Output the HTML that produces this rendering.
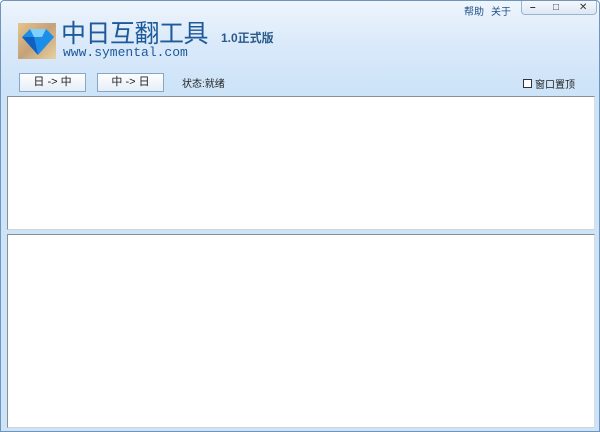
<!DOCTYPE html>
<html><head><meta charset="utf-8"><style>
*{margin:0;padding:0;box-sizing:border-box}
body{width:600px;height:432px;overflow:hidden;font-family:"Liberation Sans","Noto Sans CJK SC",sans-serif;font-size:12px}
.win{position:absolute;left:0;top:0;width:600px;height:432px;border:1px solid #6f95bd;border-radius:4px 4px 0 0;background:linear-gradient(#eef5fc 0px,#dbeafa 40px,#cde3f8 90px,#cde3f8 100%)}
.logo{position:absolute;left:17px;top:22px;width:38px;height:36px;background:linear-gradient(135deg,#e6c48a,#c4a27a 50%,#e8d0a0);}
.title{position:absolute;left:60px;top:16px;font-size:25px;color:#1e5a9a;font-family:"Noto Sans CJK SC",sans-serif;line-height:30px;letter-spacing:-0.5px}
.ver{position:absolute;left:220px;top:28px;font-size:12px;color:#2a5a8a;font-weight:bold}
.url{position:absolute;left:62px;top:44px;font-family:"Liberation Mono",monospace;font-size:13px;color:#1e5a9a}
.btn{position:absolute;top:72px;width:67px;height:19px;border:1px solid #8aa6c4;background:linear-gradient(#fdfeff,#e6eef7);font-size:11px;text-align:center;line-height:17px;color:#222}
.st{position:absolute;left:181px;top:74px;font-size:10px;color:#222}
.menu{position:absolute;top:2px;font-size:10px;color:#1e4f86}
.ctl{position:absolute;left:520px;top:0;width:76px;height:14px;border:1px solid #9ab4d0;border-top:none;border-radius:0 0 4px 4px;background:linear-gradient(#f4f8fc,#dce8f4)}
.ctl span{position:absolute;top:0;font-size:10px;color:#333;line-height:13px}
.chk{position:absolute;left:522px;top:78px;width:9px;height:9px;border:1px solid #333;background:#fff}
.chkt{position:absolute;left:534px;top:75px;font-size:10px;color:#222}
.box{position:absolute;left:6px;width:588px;background:#fff;border:1px solid #8a8f96;border-right-color:#d9dde2;border-bottom-color:#d0d4d8}
</style></head><body><div class="win">
<div class="logo"><svg width="38" height="36"><polygon points="4,14 12,6 28,6 36,14 20,32" fill="#1a8ee8"/><polygon points="12,6 28,6 24,14 16,14" fill="#7fd0ff"/><polygon points="4,14 16,14 20,32" fill="#1060c0"/></svg></div>
<div class="title">中日互翻工具</div>
<div class="ver">1.0正式版</div>
<div class="url">www.symental.com</div>
<div class="menu" style="left:463px">帮助</div>
<div class="menu" style="left:490px">关于</div>
<div class="ctl"><span style="left:8px;font-weight:bold">–</span><span style="left:31px">□</span><span style="left:57px">✕</span></div>
<div class="btn" style="left:18px">日 -&gt; 中</div>
<div class="btn" style="left:96px">中 -&gt; 日</div>
<div class="st">状态:就绪</div>
<div class="chk"></div><div class="chkt">窗口置顶</div>
<div class="box" style="top:95px;height:134px"></div>
<div class="box" style="top:233px;height:194px"></div>
</div></body></html>
